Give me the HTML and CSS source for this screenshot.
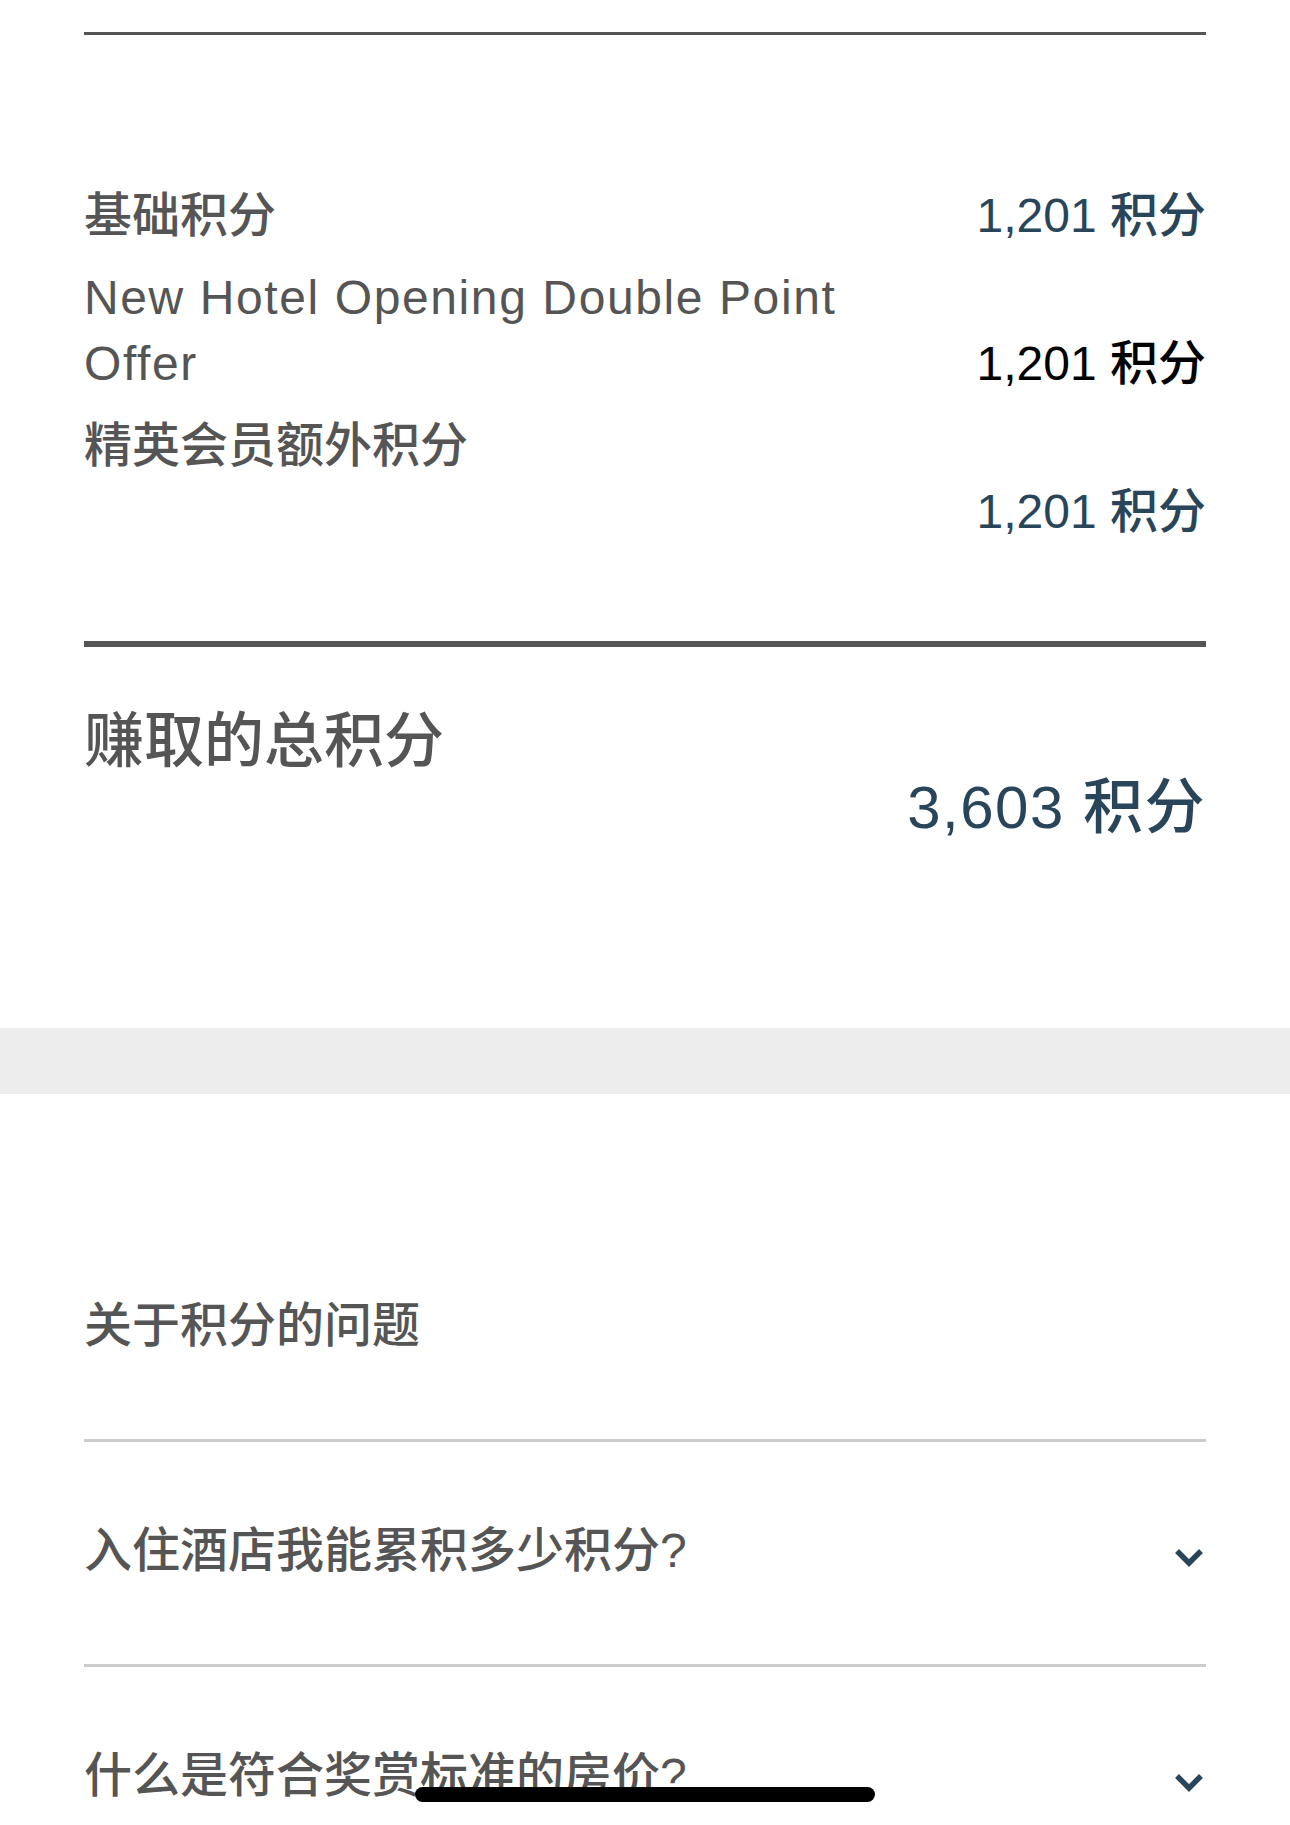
FILE: index.html
```html
<!DOCTYPE html>
<html lang="zh-CN">
  <head>
    <meta charset="UTF-8" />
    <title>积分</title>
    <link rel="stylesheet" href="styles.css">
  </head>
  <body>
    <div class="points">
      <div class="rows">
        <div class="row">
          <span class="label">基础积分</span>
          <span class="value">1,201 积分</span>
        </div>
        <div class="row">
          <span class="label label-en">New Hotel Opening Double Point Offer</span>
          <span class="value value-dark">1,201 积分</span>
        </div>
        <div class="row row-stack">
          <span class="label">精英会员额外积分</span>
          <span class="value">1,201 积分</span>
        </div>
      </div>

      <div class="total">
        <div class="total-label">赚取的总积分</div>
        <div class="total-value">3,603 积分</div>
      </div>
    </div>

    <div class="band"></div>

    <div class="faq">
      <h2 class="faq-title">关于积分的问题</h2>

      <div class="faq-item">
        <span>入住酒店我能累积多少积分?</span>
        <svg class="chevron" viewBox="0 0 30 20" width="30" height="20">
          <path d="M3 3 L15 15 L27 3" fill="none" stroke="#29455a" stroke-width="5.5" />
        </svg>
      </div>

      <div class="faq-item">
        <span>什么是符合奖赏标准的房价?</span>
        <svg class="chevron" viewBox="0 0 30 20" width="30" height="20">
          <path d="M3 3 L15 15 L27 3" fill="none" stroke="#29455a" stroke-width="5.5" />
        </svg>
      </div>
    </div>

    <div class="home-bar"></div>
  </body>
</html>
```

FILE: styles.css
```css
body {
  margin: 0;
  background: #fff;
  font-family: "Liberation Sans", "Noto Sans CJK SC", sans-serif;
  font-weight: 500;
  color: #555;
}
.points {
  padding: 32px 84px 0;
}
.rows {
  border-top: 3px solid #555;
  padding: 148px 0 96px;
  display: flex;
  flex-direction: column;
  gap: 16px;
}
.row {
  display: flex;
  justify-content: space-between;
  align-items: flex-end;
  font-size: 48px;
  line-height: 66px;
}
.row .label {
  flex: 0 1 800px;
}
.label-en {
  letter-spacing: 1.6px;
}
.row-stack {
  flex-direction: column;
  align-items: stretch;
}
.row-stack .label {
  flex: none;
}
.row-stack .value {
  align-self: flex-end;
}
.value {
  color: #29455a;
  white-space: nowrap;
}
.value-dark {
  color: #000;
}
.total {
  border-top: 6px solid #555;
  padding: 62px 0 187px;
  font-size: 60px;
  line-height: 66px;
}
.total-value {
  text-align: right;
  color: #29455a;
  letter-spacing: 1.5px;
}
.band {
  height: 66px;
  background: #ededed;
}
.faq {
  padding: 0 84px;
}
.faq-title {
  margin: 0;
  font-size: 48px;
  font-weight: 500;
  line-height: 66px;
  padding: 199px 0 80px;
  border-bottom: 3px solid #ccc;
}
.faq-item {
  display: flex;
  justify-content: space-between;
  align-items: center;
  font-size: 48px;
  line-height: 66px;
  padding: 76px 0 80px;
  border-bottom: 3px solid #ccc;
}
.chevron {
  margin-top: 14px;
  margin-right: 2px;
}
.home-bar {
  position: fixed;
  left: 50%;
  bottom: 23px;
  width: 460px;
  height: 15px;
  margin-left: -230px;
  border-radius: 8px;
  background: #000;
}
```
